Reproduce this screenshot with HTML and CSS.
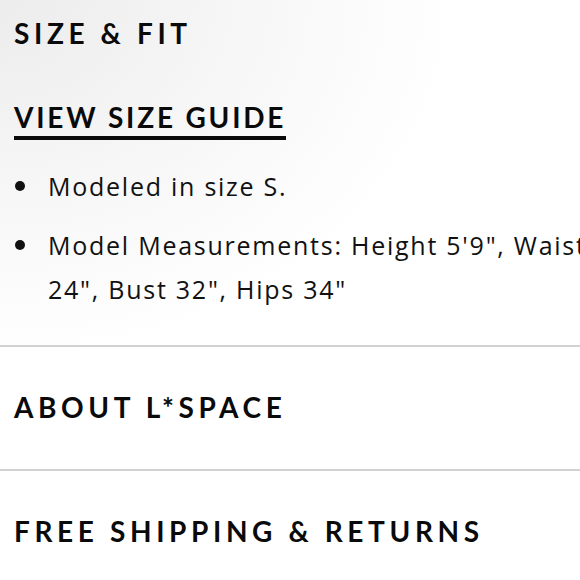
FILE: index.html
```html
<!DOCTYPE html>
<html lang="en">
<head>
<meta charset="utf-8">
<title>Size &amp; Fit</title>
<link rel="stylesheet" href="styles.css">
</head>
<body>
<div class="page">
  <section class="panel panel-open">
    <h2 class="panel-title">SIZE &amp; FIT</h2>
    <a class="guide-link" href="#">VIEW SIZE GUIDE</a>
    <ul class="facts">
      <li class="fact"><span class="dot"></span><span class="fact-text">Modeled in size S.</span></li>
      <li class="fact"><span class="dot"></span><span class="fact-text">Model Measurements: Height 5'9", Waist 24", Bust 32", Hips 34"</span></li>
    </ul>
  </section>
  <section class="panel">
    <h2 class="panel-title">ABOUT L*SPACE</h2>
  </section>
  <section class="panel">
    <h2 class="panel-title">FREE SHIPPING &amp; RETURNS</h2>
  </section>
</div>
</body>
</html>
```

FILE: styles.css
```css
html, body {
  margin: 0;
  padding: 0;
  overflow: hidden;
  background: #fff;
}
body {
  width: 580px;
  height: 580px;
  font-family: "Open Sans", "Liberation Sans", sans-serif;
  color: #111;
}
.page {
  width: 660px;
  background: radial-gradient(ellipse 460px 360px at 0 0, #ececec 0%, #f6f6f6 50%, #ffffff 100%);
}
.panel {
  border-bottom: 2px solid #d2d2d2;
  padding: 43px 14px 45px;
}
.panel:last-child {
  border-bottom: none;
}
.panel-title {
  margin: 0;
  font-family: "Lato", "Liberation Sans", sans-serif;
  font-weight: 700;
  font-size: 28px;
  line-height: 34px;
  letter-spacing: 0.165em;
  color: #0a0a0a;
}
.panel-open {
  padding-top: 16px;
  padding-bottom: 34px;
}
.guide-link {
  display: inline-block;
  margin-top: 50px;
  font-family: "Lato", "Liberation Sans", sans-serif;
  font-weight: 700;
  font-size: 28px;
  line-height: 34px;
  letter-spacing: 0.1em;
  color: #0a0a0a;
  text-decoration: none;
  border-bottom: 4px solid #0a0a0a;
  padding-bottom: 2px;
}
.facts {
  list-style: none;
  margin: 24px 0 0;
  padding: 0;
}
.fact {
  display: flex;
  align-items: flex-start;
  font-size: 25px;
  line-height: 44px;
  letter-spacing: 0.07em;
  margin-bottom: 15px;
}
.fact:last-child {
  margin-bottom: 0;
}
.dot {
  flex: none;
  width: 10px;
  height: 10px;
  border-radius: 50%;
  background: #111;
  margin: 17px 23px 0 1px;
}
.fact-text {
  flex: 1;
}
```
